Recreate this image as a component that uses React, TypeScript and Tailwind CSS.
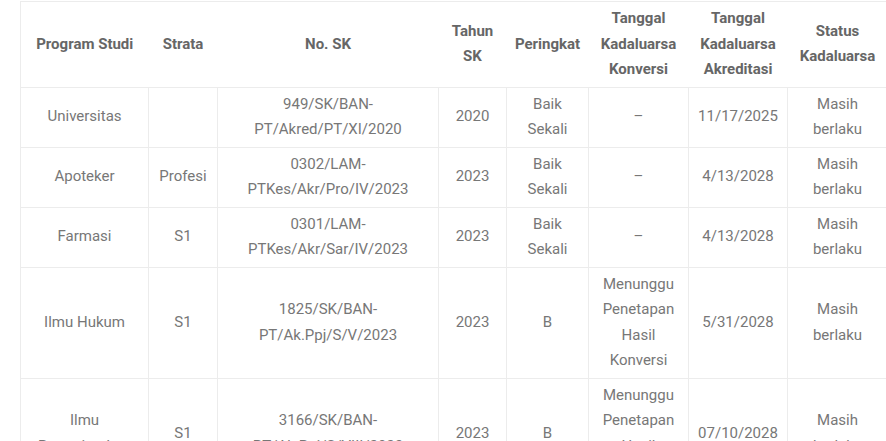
import React from "react";

type Row = {
  prodi: string;
  strata: string;
  sk: string[];
  tahun: string;
  peringkat: string;
  konversi: string;
  akreditasi: string;
  status: string;
};

const rows: Row[] = [
  {
    prodi: "Universitas",
    strata: "",
    sk: ["949/SK/BAN-", "PT/Akred/PT/XI/2020"],
    tahun: "2020",
    peringkat: "Baik Sekali",
    konversi: "–",
    akreditasi: "11/17/2025",
    status: "Masih berlaku",
  },
  {
    prodi: "Apoteker",
    strata: "Profesi",
    sk: ["0302/LAM-", "PTKes/Akr/Pro/IV/2023"],
    tahun: "2023",
    peringkat: "Baik Sekali",
    konversi: "–",
    akreditasi: "4/13/2028",
    status: "Masih berlaku",
  },
  {
    prodi: "Farmasi",
    strata: "S1",
    sk: ["0301/LAM-", "PTKes/Akr/Sar/IV/2023"],
    tahun: "2023",
    peringkat: "Baik Sekali",
    konversi: "–",
    akreditasi: "4/13/2028",
    status: "Masih berlaku",
  },
  {
    prodi: "Ilmu Hukum",
    strata: "S1",
    sk: ["1825/SK/BAN-", "PT/Ak.Ppj/S/V/2023"],
    tahun: "2023",
    peringkat: "B",
    konversi: "Menunggu Penetapan Hasil Konversi",
    akreditasi: "5/31/2028",
    status: "Masih berlaku",
  },
  {
    prodi: "Ilmu Pemerintahan",
    strata: "S1",
    sk: ["3166/SK/BAN-", "PT/Ak.Ppj/S/VIII/2023"],
    tahun: "2023",
    peringkat: "B",
    konversi: "Menunggu Penetapan Hasil Konversi",
    akreditasi: "07/10/2028",
    status: "Masih berlaku",
  },
];

const headers = [
  "Program Studi",
  "Strata",
  "No. SK",
  "Tahun SK",
  "Peringkat",
  "Tanggal Kadaluarsa Konversi",
  "Tanggal Kadaluarsa Akreditasi",
  "Status Kadaluarsa",
];

export default function App() {
  return (
    <div
      className="h-[441px] w-[886px] overflow-hidden bg-white pl-5 pt-px"
      style={{ fontFamily: "Roboto, 'Noto Sans', sans-serif" }}
    >
      <table className="w-[867px] table-fixed border-collapse border-l border-[#ececec] text-center text-[15px] leading-[25.5px]">
        <colgroup>
          <col className="w-[128px]" />
          <col className="w-[69px]" />
          <col className="w-[221px]" />
          <col className="w-[68px]" />
          <col className="w-[82px]" />
          <col className="w-[100px]" />
          <col className="w-[99px]" />
          <col className="w-[100px]" />
        </colgroup>
        <thead>
          <tr>
            {headers.map((h) => (
              <th
                key={h}
                className="border-y border-[#ececec] px-1 py-1 align-middle font-bold text-[#666666]"
              >
                {h}
              </th>
            ))}
          </tr>
        </thead>
        <tbody className="text-[#777777]">
          {rows.map((r) => (
            <tr key={r.prodi}>
              <td className="border border-[#ececec] px-3 py-1 align-middle">{r.prodi}</td>
              <td className="border border-[#ececec] px-2 py-1 align-middle">{r.strata}</td>
              <td className="border border-[#ececec] px-2 py-1 align-middle">
                {r.sk[0]}
                <br />
                {r.sk[1]}
              </td>
              <td className="border border-[#ececec] px-1 py-1 align-middle">{r.tahun}</td>
              <td className="border border-[#ececec] px-2 py-1 align-middle">{r.peringkat}</td>
              <td className="border border-[#ececec] px-1 py-1 align-middle">{r.konversi}</td>
              <td className="border border-[#ececec] px-1 py-1 align-middle">{r.akreditasi}</td>
              <td className="border border-[#ececec] px-2 py-1 align-middle">{r.status}</td>
            </tr>
          ))}
        </tbody>
      </table>
    </div>
  );
}
